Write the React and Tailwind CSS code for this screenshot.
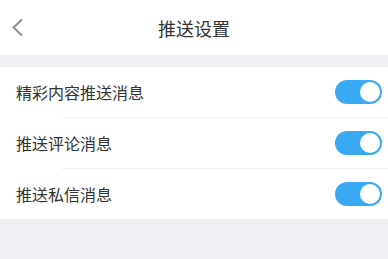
import { useState } from 'react';

const Toggle = ({ on, onChange }) => (
  <button
    onClick={onChange}
    className={`relative w-[47px] h-[24px] rounded-full ${on ? 'bg-[#3aa9f4]' : 'bg-[#e5e5ea]'}`}
  >
    <span
      className={`absolute top-[2px] w-[20px] h-[20px] rounded-full bg-white ${on ? 'right-[2px]' : 'left-[2px]'}`}
    />
  </button>
);

const App = () => {
  const [settings, setSettings] = useState([
    { label: '精彩内容推送消息', on: true },
    { label: '推送评论消息', on: true },
    { label: '推送私信消息', on: true },
  ]);

  const flip = (i) => {
    setSettings(settings.map((s, j) => (j === i ? { ...s, on: !s.on } : s)));
  };

  return (
    <div
      className="min-h-screen bg-[#efeff4] text-[#333333]"
      style={{ fontFamily: '"Noto Sans CJK SC", "Noto Sans", sans-serif' }}
    >
      {/* Header */}
      <header className="relative h-[55px] bg-white flex items-center justify-center">
        <button className="absolute left-[11px] top-[18px]">
          <svg width="13" height="19" viewBox="0 0 13 19" fill="none">
            <path d="M11 1.5L2.5 9.5L11 17.5" stroke="#8a8a8a" strokeWidth="1.8" />
          </svg>
        </button>
        <h1 className="text-[18px] leading-none">推送设置</h1>
      </header>

      {/* Settings list */}
      <div className="mt-[12px] bg-white">
        {settings.map((s, i) => (
          <div key={s.label} className="flex">
            <div className="flex-1 flex flex-col">
              <div className="h-[50px] flex items-center justify-between pl-[16px] pr-[6px]">
                <span className="text-[16px]">{s.label}</span>
                <Toggle on={s.on} onChange={() => flip(i)} />
              </div>
              {i < settings.length - 1 && (
                <div className="ml-[62px] h-px bg-[#f0f0f0]" />
              )}
            </div>
          </div>
        ))}
      </div>
    </div>
  );
};

export default App;
